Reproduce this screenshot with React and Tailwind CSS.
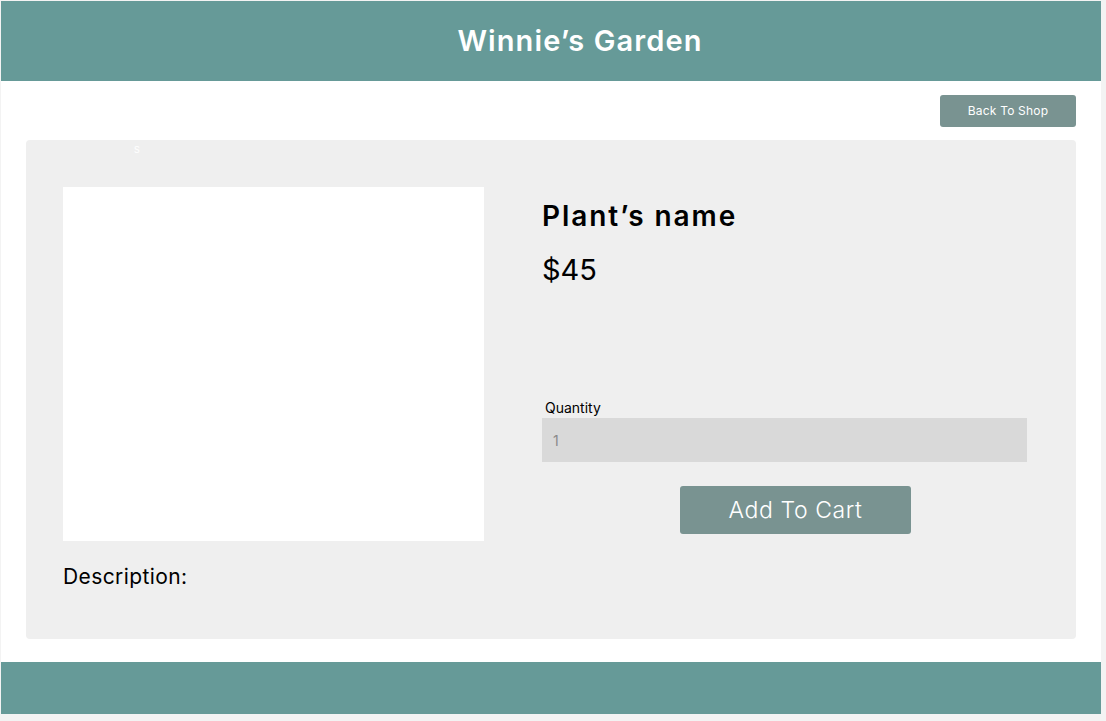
const teal = 'bg-[#669a98]';

const ProductPanel = () => {
    return (
        <div className="mx-[25px] mt-[13px] h-[499px] rounded-[4px] bg-[#efefef] relative">
            <span className="absolute left-[108px] top-[3px] text-[9px] text-white" style={{ fontFamily: 'Inter' }}>S</span>
            <div className="flex pl-[37px] pt-[47px]">
                {/* Image */}
                <div className="w-[421px] h-[354px] bg-white shrink-0"></div>

                {/* Details */}
                <div className="ml-[58px] w-[485px] flex flex-col">
                    <h2 className="mt-[12px] text-[28px] leading-[34px] font-semibold text-black tracking-[1.9px]" style={{ fontFamily: 'Inter, sans-serif' }}>
                        Plant’s name
                    </h2>
                    <div className="mt-[20px] text-[29px] leading-[34px] text-black" style={{ fontFamily: 'Inter, sans-serif' }}>$45</div>

                    <label className="mt-[112px] ml-[3px] text-[14px] leading-[17px] text-black" style={{ fontFamily: 'Inter, sans-serif' }}>Quantity</label>
                    <div className="h-[44px] mt-[2px] bg-[#d9d9d9] flex items-center px-[11px] text-[14px] text-[#8a8a8a]" style={{ fontFamily: 'Inter, sans-serif' }}>1</div>

                    <button className="mt-[24px] ml-[138px] self-start w-[231px] h-[48px] rounded-[3px] bg-[#799391] text-white text-[23px] font-light tracking-[0.6px]" style={{ fontFamily: 'Inter, sans-serif' }}>
                        Add To Cart
                    </button>
                </div>
            </div>
            <div className="pl-[37px] mt-[23px] text-[21px] leading-[26px] text-black tracking-[0.4px]" style={{ fontFamily: 'Inter, sans-serif' }}>Description:</div>
        </div>
    );
};

export default function App() {
    return (
        <div className="w-[1106px] h-[721px] bg-[#f3f3f3] pt-px pl-px overflow-hidden">
            <div className="w-[1100px] h-[713px] bg-white flex flex-col">
                {/* Header */}
                <header className={`${teal} h-[80px] flex items-center justify-center pl-[58px]`}>
                    <h1 className="text-[29px] font-semibold text-white tracking-[1.1px]" style={{ fontFamily: 'Inter, sans-serif' }}>
                        Winnie’s Garden
                    </h1>
                </header>

                <div className="flex justify-end pr-[25px] pt-[14px]">
                    <button className="w-[136px] h-[32px] rounded-[3px] bg-[#799391] text-white text-[12px] tracking-[0.2px]" style={{ fontFamily: 'Inter, sans-serif' }}>
                        Back To Shop
                    </button>
                </div>

                <ProductPanel />

                <footer className={`${teal} mt-[23px] h-[52px]`}></footer>
            </div>
        </div>
    );
}
